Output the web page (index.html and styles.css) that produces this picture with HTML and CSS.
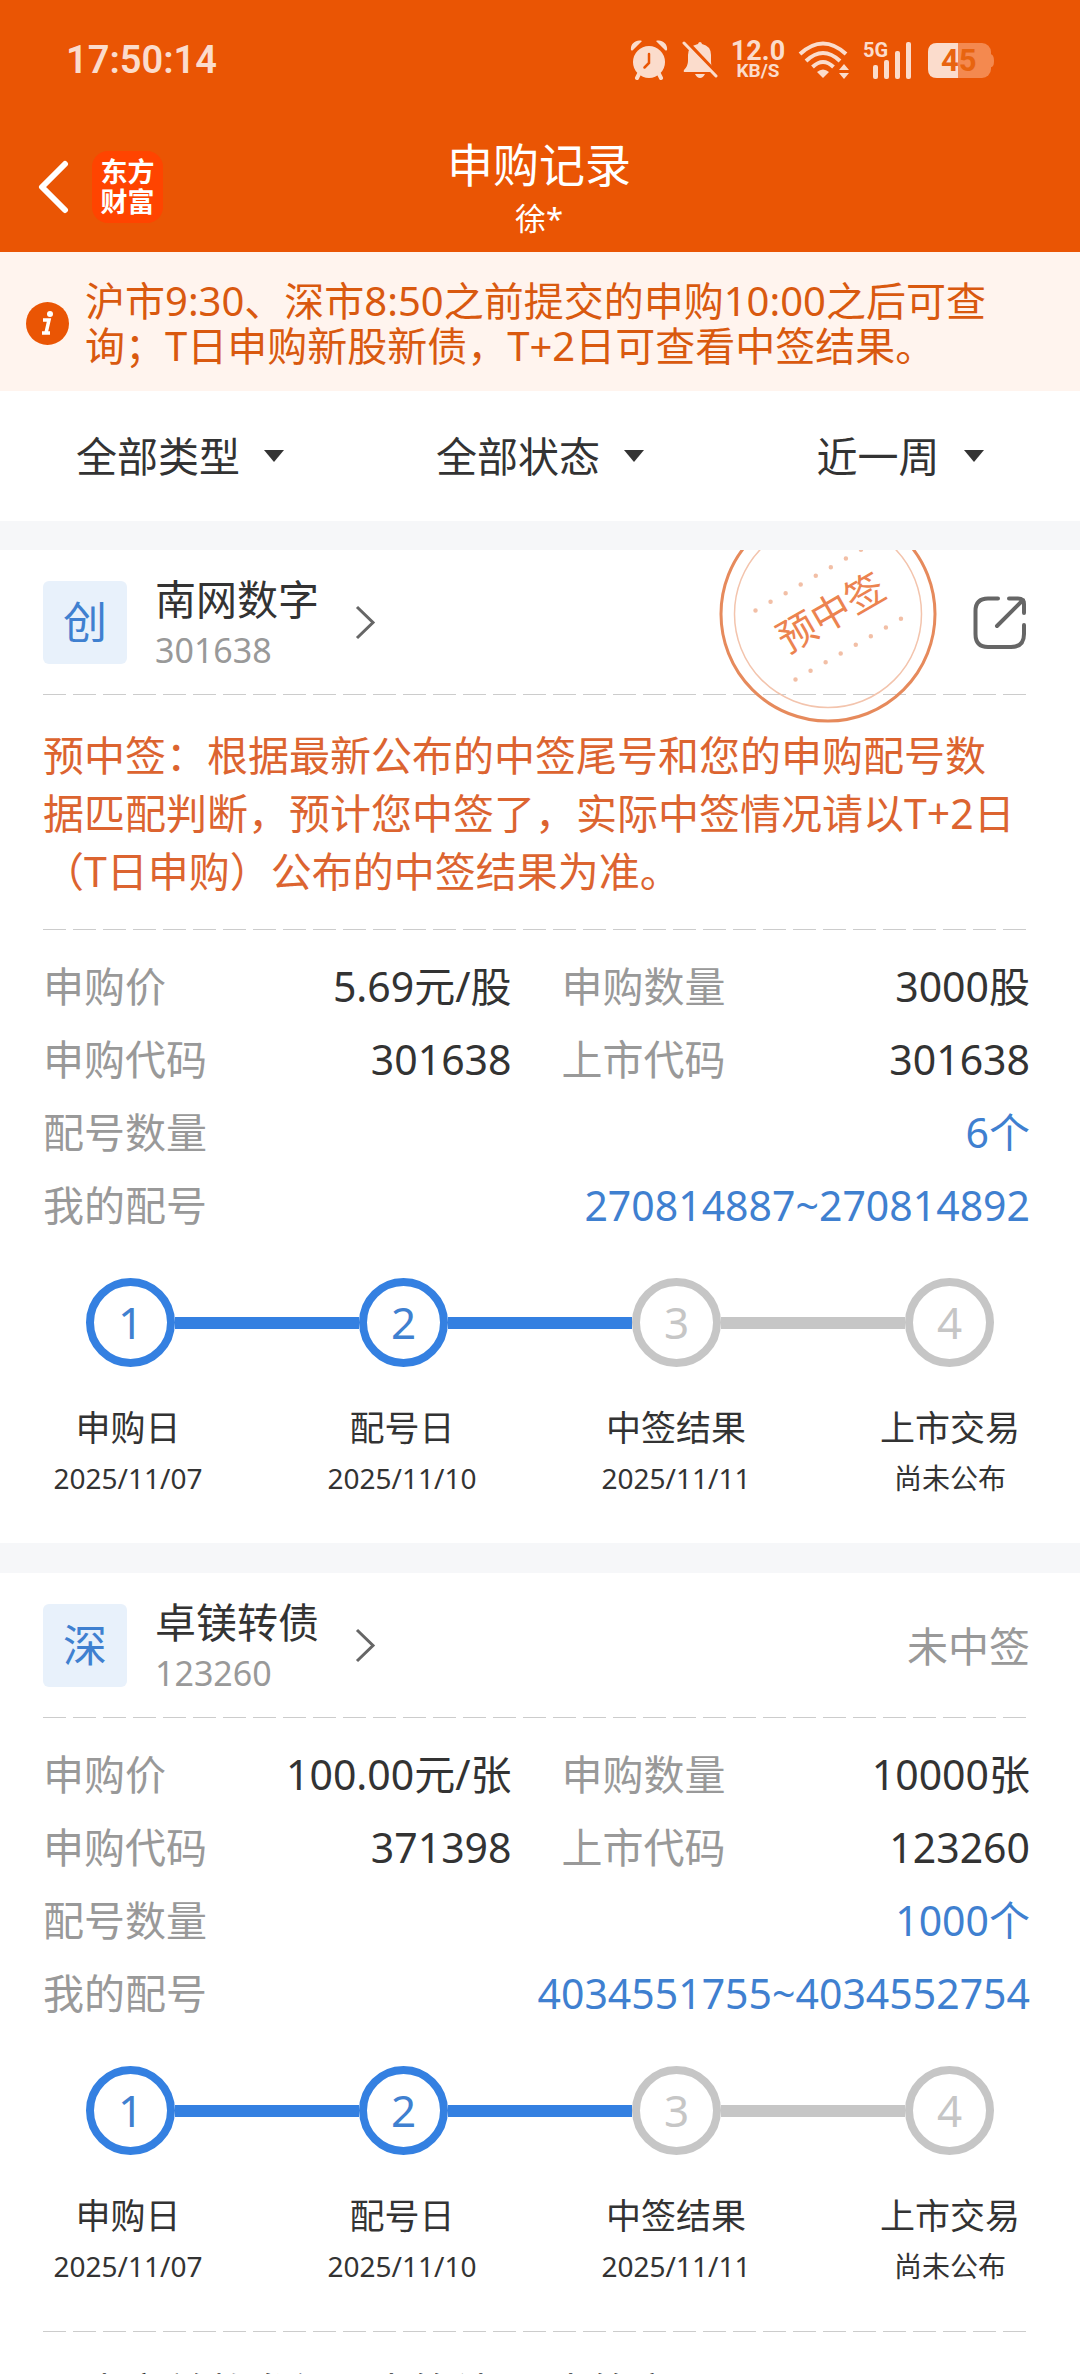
FILE: index.html
```html
<!DOCTYPE html>
<html lang="zh-CN">
<head>
<meta charset="utf-8">
<meta name="viewport" content="width=device-width, initial-scale=1">
<title>申购记录</title>
<link rel="stylesheet" href="styles.css">
</head>
<body>
<div class="app">
  <header class="top">
    <div class="status">
      <time class="clock">17:50:14</time>
      <div class="status-icons">
        <svg class="ic-alarm" width="38" height="40" viewBox="0 0 38 40" aria-hidden="true">
          <circle cx="19" cy="22" r="16" fill="currentColor"/>
          <path d="M9 34l-2 4M29 34l2 4" stroke="currentColor" stroke-width="4" stroke-linecap="round"/>
          <path d="M1 10C0 4 6-1 12 1L3 10Q2 11 1 10ZM37 10C38 4 32-1 26 1L35 10Q36 11 37 10Z" fill="currentColor"/>
          <path d="M19 14v9l-4.500 4.500" fill="none" stroke="#ea5504" stroke-width="2.500" stroke-linecap="round"/>
        </svg>
        <svg class="ic-bell" width="36" height="38" viewBox="0 0 36 38" aria-hidden="true">
          <path d="M18 1q1.500 0 2 2q9 2 9 11v7q0 5 4 10H3q-2 0-1-2q4-4 4-9v-6q0-9 10-11q.5-2 2-2Z" fill="currentColor"/>
          <path d="M13 33h10q-2 4-5 4t-5-4Z" fill="currentColor"/>
          <path d="M4 0L38 36" stroke="#ea5504" stroke-width="4"/>
          <path d="M2 2L34 35" stroke="currentColor" stroke-width="3" stroke-linecap="round"/>
        </svg>
        <div class="speed"><b>12.0</b><span>KB/S</span></div>
        <svg class="ic-wifi" width="52" height="38" viewBox="0 0 52 38" aria-hidden="true">
          <g fill="none" stroke="currentColor" stroke-width="4">
            <path d="M2 13Q25-8 48 13"/><path d="M8 20Q25 4 42 20"/><path d="M14.500 26Q25 16 35.500 26"/>
          </g>
          <path d="M19 31q6-5 12 0l-6 6Z" fill="currentColor"/>
          <path d="M46 23l5 6H41ZM46 38l5-6H41Z" fill="currentColor"/>
        </svg>
        <svg class="ic-signal" width="50" height="38" viewBox="0 0 50 38" aria-label="5G">
          <text x="0" y="16" class="net">5G</text>
          <g fill="currentColor"><rect x="10" y="24" width="5" height="14" rx="2"/><rect x="21" y="19" width="5" height="19" rx="2"/><rect x="32" y="10" width="5" height="28" rx="2"/><rect x="43" y="1" width="5" height="37" rx="2"/></g>
        </svg>
        <svg class="ic-battery" width="66" height="35" viewBox="0 0 66 35" aria-label="45">
          <path d="M62 11q4 0 4 7t-4 6Z" fill="#f4894f"/>
          <rect width="63" height="35" rx="9" fill="#f4894f"/>
          <path d="M30 0H9Q0 0 0 9v17q0 9 9 9H30Z" fill="#fbdccc"/>
          <text x="13" y="28" class="level">45</text>
        </svg>
      </div>
    </div>
    <div class="titlebar">
      <div class="nav">
        <button class="back" type="button" aria-label="返回">
          <svg width="31" height="54" viewBox="0 0 31 54"><path d="M27 4L4 27L27 50" fill="none" stroke="#fff" stroke-width="6" stroke-linecap="round" stroke-linejoin="round"/></svg>
        </button>
        <a class="logo" href="#">东方<br>财富</a>
      </div>
      <div class="heading">
        <h1>申购记录</h1>
        <p>徐*</p>
      </div>
    </div>
  </header>

  <section class="notice">
    <svg width="43" height="43" viewBox="0 0 43 43" aria-hidden="true">
      <circle cx="21.500" cy="21.500" r="21.500" fill="#ea5504"/>
      <circle cx="24" cy="12" r="3" fill="#fff"/>
      <path d="M17 18h6l-3 13h3M16 31h8" fill="none" stroke="#fff" stroke-width="3.500"/>
    </svg>
    <p>沪市9:30、深市8:50之前提交的申购10:00之后可查询；T日申购新股新债，T+2日可查看中签结果。</p>
  </section>

  <form class="filters">
    <select aria-label="类型"><option>全部类型</option></select>
    <select aria-label="状态"><option>全部状态</option></select>
    <select aria-label="时间"><option>近一周</option></select>
  </form>

  <main>
    <article class="card">
      <div class="card-head">
        <a class="stock" href="#">
          <span class="badge">创</span>
          <span class="stock-text"><strong>南网数字</strong><small>301638</small></span>
          <svg class="chevron" width="21" height="35" viewBox="0 0 21 35"><path d="M2 2L18 17.500L2 33" fill="none" stroke="#666" stroke-width="3"/></svg>
        </a>
        <svg class="stamp" width="220" height="220" viewBox="-110 -110 220 220" role="img" aria-label="预中签">
          <circle r="107" fill="none" stroke="#e68a5c" stroke-width="3"/>
          <circle r="93.500" fill="none" stroke="#f3c4ad" stroke-width="1.500"/>
          <path d="M-72.500-3.500L33-64.200M-32.500 65.500L73 4.800" fill="none" stroke="#f2bfa6" stroke-width="4.500" stroke-linecap="round" stroke-dasharray="0 17.380"/>
          <text class="stamp-text" text-anchor="middle" transform="translate(3 -1) rotate(-30)" y="14">预中签</text>
        </svg>
        <button class="share" type="button" aria-label="分享">
          <svg width="54" height="54" viewBox="0 0 54 54"><path d="M25 2.500H15Q2.500 2.500 2.500 15V38Q2.500 51 15 51H38Q51 51 51 38V29M36 2.500H45Q51 2.500 51 8V17M24 30L50 4" fill="none" stroke="#666" stroke-width="4" stroke-linecap="round"/></svg>
        </button>
      </div>
      <p class="message">预中签：根据最新公布的中签尾号和您的申购配号数据匹配判断，预计您中签了，实际中签情况请以T+2日（T日申购）公布的中签结果为准。</p>
      <dl class="facts">
        <div><dt>申购价</dt><dd>5.69元/股</dd></div>
        <div><dt>申购数量</dt><dd>3000股</dd></div>
        <div><dt>申购代码</dt><dd>301638</dd></div>
        <div><dt>上市代码</dt><dd>301638</dd></div>
        <div class="wide"><dt>配号数量</dt><dd><a href="#">6个</a></dd></div>
        <div class="wide"><dt>我的配号</dt><dd><a href="#">270814887~270814892</a></dd></div>
      </dl>
      <div class="track">
        <span class="dot done">1</span><i class="bar done"></i>
        <span class="dot done">2</span><i class="bar done"></i>
        <span class="dot">3</span><i class="bar"></i>
        <span class="dot">4</span>
      </div>
      <ol class="steps">
        <li>申购日<time>2025/11/07</time></li>
        <li>配号日<time>2025/11/10</time></li>
        <li>中签结果<time>2025/11/11</time></li>
        <li>上市交易<time>尚未公布</time></li>
      </ol>
    </article>

    <article class="card">
      <div class="card-head">
        <a class="stock" href="#">
          <span class="badge">深</span>
          <span class="stock-text"><strong>卓镁转债</strong><small>123260</small></span>
          <svg class="chevron" width="21" height="35" viewBox="0 0 21 35"><path d="M2 2L18 17.500L2 33" fill="none" stroke="#666" stroke-width="3"/></svg>
        </a>
        <span class="result">未中签</span>
      </div>
      <dl class="facts">
        <div><dt>申购价</dt><dd>100.00元/张</dd></div>
        <div><dt>申购数量</dt><dd>10000张</dd></div>
        <div><dt>申购代码</dt><dd>371398</dd></div>
        <div><dt>上市代码</dt><dd>123260</dd></div>
        <div class="wide"><dt>配号数量</dt><dd><a href="#">1000个</a></dd></div>
        <div class="wide"><dt>我的配号</dt><dd><a href="#">4034551755~4034552754</a></dd></div>
      </dl>
      <div class="track">
        <span class="dot done">1</span><i class="bar done"></i>
        <span class="dot done">2</span><i class="bar done"></i>
        <span class="dot">3</span><i class="bar"></i>
        <span class="dot">4</span>
      </div>
      <ol class="steps">
        <li>申购日<time>2025/11/07</time></li>
        <li>配号日<time>2025/11/10</time></li>
        <li>中签结果<time>2025/11/11</time></li>
        <li>上市交易<time>尚未公布</time></li>
      </ol>
      <p class="more">可查市前数发行日中签结果/中签率</p>
    </article>
  </main>
</div>
</body>
</html>
```
FILE: styles.css
```css
* { box-sizing: border-box; margin: 0; padding: 0; }

body {
  font-family: "Noto Sans", "Noto Sans CJK SC", sans-serif;
  font-size: 41px;
  color: #333;
  background: #fff;
}

a { color: inherit; text-decoration: none; }
button { border: 0; background: none; font: inherit; }
svg { display: block; flex: none; }

.app { height: 100vh; overflow: hidden; }

/* Header */
.top { background: #ea5504; color: #fff; height: 252px; }

.status {
  display: flex;
  justify-content: space-between;
  align-items: center;
  padding: 40px 86px 0 66px;
  color: #fbdccc;
}
.clock { font: 600 38px/40px Roboto, sans-serif; }
.status-icons { display: flex; align-items: center; }
.ic-bell { margin-left: 14px; }
.speed {
  display: flex;
  flex-direction: column;
  align-items: center;
  width: 56px;
  margin: 0 12px;
  font-family: Roboto, sans-serif;
}
.speed b { font-size: 27px; line-height: 22px; }
.speed span { font-size: 19px; line-height: 18px; font-weight: 700; }
.ic-signal { margin-left: 13px; overflow: visible; }
.net { font: 700 20px Roboto, sans-serif; fill: currentColor; }
.ic-battery { margin-left: 15px; }
.level { font: 700 31px Roboto, sans-serif; fill: #e8640f; }

.titlebar {
  display: grid;
  grid-template-columns: 1fr auto 1fr;
  padding: 56px 40px 0 38px;
}
.nav { display: flex; align-items: center; gap: 23px; height: 101px; }
.back { display: flex; cursor: pointer; }
.logo {
  width: 71px;
  padding: 5px 0 7px;
  border-radius: 16px;
  background: #ff4400;
  font: 700 27px/30px "Noto Sans CJK SC", sans-serif;
  text-align: center;
}
.heading { text-align: center; }
.heading h1 { font-size: 46px; line-height: 56px; font-weight: 400; }
.heading p { font-size: 31px; line-height: 52px; }

/* Notice */
.notice {
  display: flex;
  align-items: center;
  gap: 16px;
  padding: 26px 80px 23px 26px;
  background: #fff4ee;
  color: #d9590f;
  font-size: 40px;
  line-height: 45px;
}

/* Filters */
.filters {
  display: grid;
  grid-template-columns: repeat(3, 1fr);
  justify-items: center;
  padding: 35px 0;
}
.filters select {
  appearance: none;
  border: 0;
  padding-right: 44px;
  font: inherit;
  line-height: 60px;
  height: 60px;
  color: inherit;
  background: url("data:image/svg+xml,%3Csvg xmlns='http://www.w3.org/2000/svg' width='20' height='12'%3E%3Cpath d='M0 0H20L10 12Z' fill='%23333'/%3E%3C/svg%3E") no-repeat right center;
}

/* Cards */
main { display: grid; gap: 30px; padding-top: 29px; background: #f6f7f9; }
.card { background: #fff; overflow: hidden; }

.card-head,
.message {
  background: repeating-linear-gradient(90deg, #ccc 0 23px, transparent 23px 30px) no-repeat 43px 100% / calc(100% - 93px) 1px;
}
.card-head {
  position: relative;
  display: flex;
  align-items: center;
  justify-content: space-between;
  height: 145px;
  padding: 0 50px 0 43px;
}
.stock { display: flex; align-items: center; }
.badge {
  width: 84px;
  height: 83px;
  border-radius: 6px;
  background: #e8f1fb;
  color: #3f80d0;
  font-size: 44px;
  line-height: 83px;
  text-align: center;
}
.stock-text { display: grid; margin-left: 28px; }
.stock-text strong { font-weight: 400; line-height: 54px; }
.stock-text small { font-size: 34px; line-height: 48px; color: #999; }
.chevron { margin-left: 36px; }
.result { padding-bottom: 4px; color: #999; }
.share { display: flex; margin-right: 3px; cursor: pointer; }

/* Seal laid over the card's upper right corner */
.stamp { position: absolute; top: -46px; right: 142px; }
.stamp-text { font-size: 39px; fill: #ec8350; }

.message {
  padding: 31px 58px 30px 43px;
  color: #dc6430;
  line-height: 58px;
}

.facts {
  display: grid;
  grid-template-columns: 1fr 1fr;
  column-gap: 50px;
  padding: 20px 50px 36px 43px;
  line-height: 73px;
}
.facts div { display: flex; justify-content: space-between; }
.facts .wide { grid-column: 1 / -1; }
.facts dt { color: #999; }
.facts a { color: #3f80d0; }

.track { display: flex; align-items: center; padding: 0 86px; }
.dot {
  width: 89px;
  height: 89px;
  border: 8px solid #c6c6c6;
  border-radius: 50%;
  color: #c6c6c6;
  font-size: 44px;
  line-height: 73px;
  text-align: center;
}
.bar { flex: 1; height: 12px; background: #c6c6c6; }
.dot.done { border-color: #3480e1; color: #3f80d0; }
.bar.done { background: #3480e1; }

.steps {
  display: flex;
  justify-content: space-between;
  list-style: none;
  padding: 39px 42px 45px 40px;
  font-size: 35px;
  line-height: 44px;
}
.steps li { width: 176px; text-align: center; }
.steps time { display: block; margin-top: 8px; font-size: 28px; line-height: 40px; }

.more {
  padding: 32px 43px;
  line-height: 58px;
  background: repeating-linear-gradient(90deg, #ccc 0 23px, transparent 23px 30px) no-repeat 43px 0 / calc(100% - 93px) 1px;
}
```
